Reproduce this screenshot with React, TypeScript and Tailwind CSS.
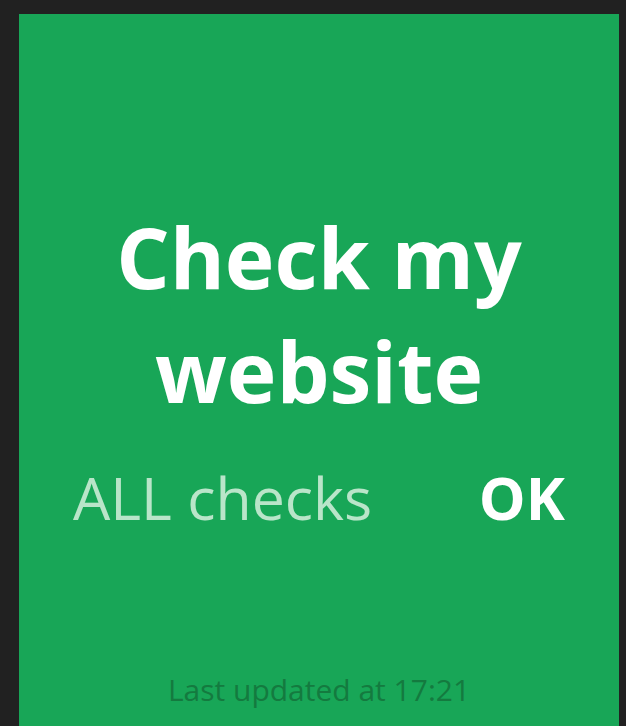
export default function App() {
  return (
    <div className="min-h-[726px] bg-[#212121] pl-[19px] pr-[7px] pt-[14px]">
      <div className="flex h-[712px] flex-col bg-[#18a657] pt-[186px] font-['Open_Sans',sans-serif]">
        <h1 className="text-center text-[84px] font-bold leading-[114px] text-white">
          Check my
          <br />
          website
        </h1>
        <div className="mt-[28px] flex items-center justify-between px-[54px] text-[59px] leading-[82px]">
          <span className="text-[#b9e5c9]">ALL checks</span>
          <span className="font-bold text-white">OK</span>
        </div>
        <p className="mt-auto pb-[16px] text-center text-[30px] leading-[40px] text-[#147a3f]">
          Last updated at 17:21
        </p>
      </div>
    </div>
  )
}
